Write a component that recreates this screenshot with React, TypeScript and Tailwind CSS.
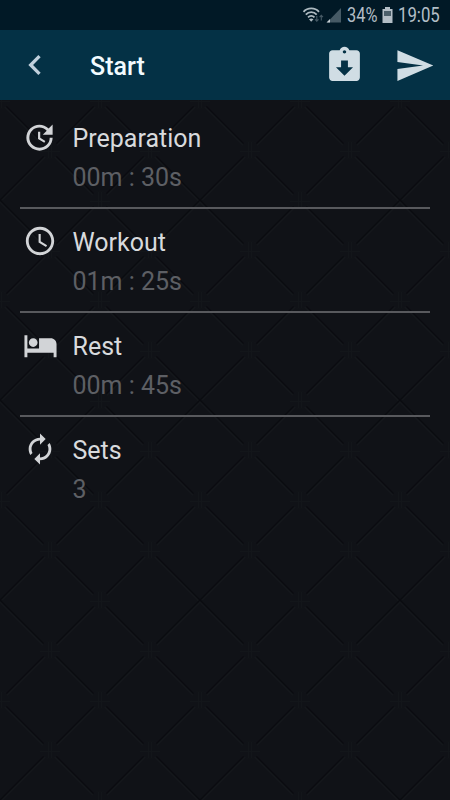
import type { ReactNode } from "react";
import {
  MdAccessTime,
  MdAssignmentReturned,
  MdAutorenew,
  MdChevronLeft,
  MdHotel,
  MdSend,
  MdUpdate,
} from "react-icons/md";

const tileNodes = [
  [100, 0],
  [100, 200],
  [0, 100],
  [100, 100],
  [200, 100],
  [50, 50],
  [150, 50],
  [50, 150],
  [150, 150],
];

// Embossed diamond texture, one tile is 200x200
const Texture = () => {
  return (
    <svg className="absolute inset-0 h-full w-full" aria-hidden="true">
      <defs>
        <pattern id="diamonds" y="100" width="200" height="200" patternUnits="userSpaceOnUse">
          <path
            d="M0 2L200 202M0 -198L200 2M0 102L100 202M100 2L200 102M0 202L200 2M0 102L100 2M100 202L200 102"
            stroke="#14171b"
            strokeWidth="1.5"
          />
          <path
            d="M0 0L200 200M0 100L100 200M100 0L200 100M0 200L200 0M0 100L100 0M100 200L200 100"
            stroke="#0a0b10"
            strokeWidth="1.5"
          />
          {tileNodes.map(([x, y]) => (
            <g key={`${x}-${y}`} transform={`translate(${x} ${y})`}>
              <circle r="9" fill="#101217" />
              <path d="M-10 1.5H10M-1.5 -8V8M1.5 -8V8" stroke="#13161a" strokeWidth="1" />
            </g>
          ))}
        </pattern>
      </defs>
      <rect width="100%" height="100%" fill="url(#diamonds)" />
    </svg>
  );
};

const StatusBar = () => {
  return (
    <div className="flex h-[30px] items-center justify-end bg-[#011926] pr-[10px] text-[19.5px] leading-none text-[#b3bec6]">
      <svg className="h-5 w-10" viewBox="0 0 40 20" fill="none">
        <g stroke="#aebac1" strokeWidth="1.8">
          <path d="M1.500 6.800C5.500 2.200 13 2.200 17 6.800" />
          <path d="M3.800 9.600C6.800 6.200 11.700 6.200 14.700 9.600" />
          <path d="M6 12.400C8 10.300 10.500 10.300 12.500 12.400" />
        </g>
        <path d="M7 14.300Q9.200 12.700 11.500 14.300L9.200 16.800Z" fill="#aebac1" />
        <path d="M14.800 11v5M13.100 14.300l1.700 1.800 1.700-1.800M19.300 15.500v-5M17.600 12.200l1.700-1.800 1.700 1.800" stroke="#465a65" strokeWidth="1.1" />
        <path d="M39 3V17.500H25Z" fill="#465a65" />
        <path d="M28 14V17.500H24.500Z" fill="#c5ced3" />
      </svg>
      <span className="ml-[5px] w-[31px] pt-0.5 whitespace-nowrap">
        <span className="inline-block origin-left scale-x-[0.84]">34%</span>
      </span>
      <svg className="ml-1 h-4 w-[11px]" viewBox="0 0 11 16">
        <path d="M3 0h5v2h2.500v14H0.500V2H3z" fill="#b3bec6" />
        <path d="M2 4h7v5H2z" fill="#4b5f6a" />
      </svg>
      <span className="ml-[5px] w-[42px] pt-0.5 whitespace-nowrap">
        <span className="inline-block origin-left scale-x-[0.86]">19:05</span>
      </span>
    </div>
  );
};

const Header = () => {
  return (
    <header className="flex h-[70px] items-center bg-[#043145] pr-[15px] pl-[15px]">
      <button>
        <MdChevronLeft className="size-10 text-[#c0d0dc]" />
      </button>
      <h1 className="ml-[35px] flex-1 pt-[3px] text-[25px] leading-none font-medium text-[#f2fbff]">Start</h1>
      <button className="mr-[29px]">
        <MdAssignmentReturned className="size-[41px] text-[#d0dde4]" />
      </button>
      <button>
        <MdSend className="size-[41px] text-[#d0dde4]" />
      </button>
    </header>
  );
};

type RowProps = {
  icon: ReactNode;
  title: string;
  value: string;
};

const Row = ({ icon, title, value }: RowProps) => {
  return (
    <li className="flex h-[104px] border-b-2 border-[#58595d] pt-4 last:border-0">
      <div className="flex h-8 w-[39px] items-center justify-center text-[#d2d4d7]">{icon}</div>
      <div className="ml-[13.5px]">
        <p className="text-[25px] leading-9 text-[#d8dadd]">{title}</p>
        <p className="mt-[3px] text-[25px] leading-9 text-[#5d5f64]">{value}</p>
      </div>
    </li>
  );
};

const App = () => {
  return (
    <div className="flex h-[800px] w-[450px] flex-col overflow-hidden bg-[#101217] font-['Roboto',sans-serif]">
      <StatusBar />
      <Header />
      <main className="relative flex-1">
        <Texture />
        <ul className="relative mx-5 pt-[5px]">
          <Row icon={<MdUpdate className="size-[35px]" />} title="Preparation" value="00m : 30s" />
          <Row icon={<MdAccessTime className="size-[34px]" />} title="Workout" value="01m : 25s" />
          <Row icon={<MdHotel className="ml-px size-[35px]" />} title="Rest" value="00m : 45s" />
          <Row icon={<MdAutorenew className="size-[34px]" />} title="Sets" value="3" />
        </ul>
      </main>
    </div>
  );
};

export default App;
